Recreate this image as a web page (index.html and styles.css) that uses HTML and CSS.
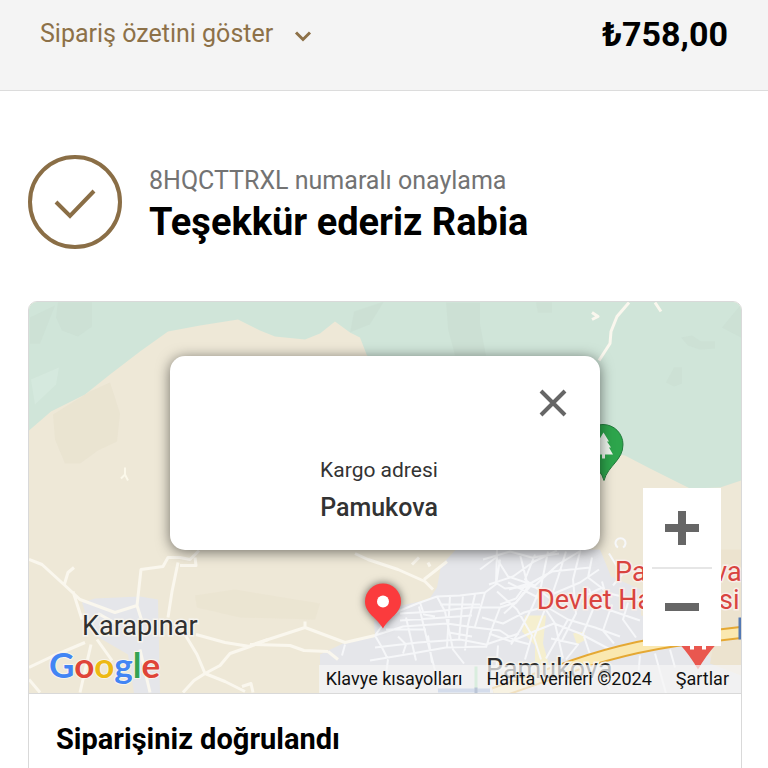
FILE: index.html
```html
<!DOCTYPE html>
<html lang="tr">
<head>
<meta charset="utf-8">
<meta name="viewport" content="width=device-width, initial-scale=1">
<title>Teşekkür ederiz</title>
<link rel="stylesheet" href="styles.css">
</head>
<body>
<header class="summary">
  <button class="summary-toggle" type="button">Sipariş özetini göster
    <svg class="chevron" viewBox="0 0 18 12" aria-hidden="true"><path d="M2 2.500L9 9.500L16 2.500"/></svg>
  </button>
  <span class="total">₺758,00</span>
</header>
<main class="content">
  <section class="thanks">
    <svg class="check" viewBox="0 0 94 94" aria-hidden="true"><circle cx="47" cy="47" r="45"/><path d="M28 47L42 61L66 36"/></svg>
    <div class="thanks-text">
      <p class="order-no">8HQCTTRXL numaralı onaylama</p>
      <h1 class="title">Teşekkür ederiz Rabia</h1>
    </div>
  </section>
  <section class="card">
    <div class="map">
      <svg class="map-art" viewBox="29 302 712 392" preserveAspectRatio="xMidYMid slice">
        <rect x="29" y="302" width="712" height="392" fill="#eee8d7"/>
        <path fill="#d0e5d9" d="M29 302H741V481L720 488L690 489L650 469L625 456L600 452L367 356L360 338L350 333L335 322L320 334L305 340L275 337L260 331L238 320L200 326L168 332L140 352L110 375L85 395L51 412L29 431Z"/>
        <g fill="#c9ddd1" opacity=".5"><path d="M58 303H92V327L78 337L62 331L56 318Z"/><path d="M30 318L55 306L40 344H30Z"/><path d="M354 312L384 302L370 325L350 333Z"/><path d="M446 303H480V324L486 356H455L448 330Z"/><path d="M536 303H552V313H538Z"/><path d="M681 338L692 336L701 342H715V349L700 350L688 346Z"/><path d="M674 368H682V384L674 387L666 383Z"/><path d="M722 328L741 305V338Z"/></g>
        <path fill="#d5e9de" d="M31 380L59 368L56 385L35 405Z"/>
        <path fill="#e9e2cf" opacity=".8" d="M53 415L90 392L110 383L120 414L117 442L98 451L80 464H65L55 440Z"/>
        <path fill="#e9e2cf" d="M195 596L235 590L320 604L315 620L240 618L197 608Z" opacity=".6"/>
        <path d="M125 468V475L121 479M125 475L128 481" fill="none" stroke="#fbf8ea" stroke-width="2"/>
        <g fill="#e5e6ea"><path d="M82 603L95 599L140 597L158 600L160 694H134L128 655L92 634Z"/><path d="M320 694V655L345 643L375 636L374 622L401 606L429 600L437 588L441 566L456 550H600L611 577L641 590V616L680 625L712 660L741 672V694Z"/></g>
        <path fill="#ece3cf" d="M645 550H741V676L710 664L717 625L645 625Z"/>
        <g fill="#f5efcf"><path d="M525 616H546L543 644L550 669H535V646L522 632Z"/><path d="M573 634L584 632L586 640L577 645Z"/></g>
        <g class="roads">
          <path d="M29 560L42 565L65 586L80 600L115 613L137 606L141 570L163 567L168 558H180L190 560L199 551M180 566H196L195 558M64 586L68 573L74 568M73 592L82 620M178 563L172 592L168 618M98 614L116 624M137 606L142 622M196 635L225 643L250 647L268 640M185 635L197 655L205 674L194 681L183 693M205 674L225 682L245 692M205 674L220 666L230 654L250 647M29 668L52 657L85 643M91 645L80 693M97 640L112 661M140 650L150 693M29 680L40 693M242 687L251 684L253 693"/>
          <path d="M250 646L305 628L345 643L375 636M305 628V622M250 645L290 646L304 651L328 652M328 652L338 660M355 554L368 560L398 570L425 582L433 590M424 580L447 562M412 565L419 558M428 563L430 567"/>
          <path d="M629 303L617 317L611 332L610 344L599 361M655 303L661 312M592 313L598 317L592 320"/>
        </g>
        <g class="streets">
          <path d="M375 636L386 621L400 611L420 603L437 597L460 596L485 593L497 584L505 589L530 587M437 597L445 612L453 650L464 664M420 603L424 615L435 617M375 636L382 648L388 660M375 636L403 627L447 624L475 628L500 631L515 641L530 645M375 648L418 643L460 640L486 645L519 634M370 661L412 654L446 648L487 647M400 614L435 612L470 608L500 608M400 621L430 619L472 616M398 637L406 645L403 654M419 607L427 640L440 690M406 618L416 661M450 597L447 647M463 596L459 640M475 595L468 625L465 651M485 593L475 627M440 605H480M449 633L472 637M386 630L426 630M428 636L432 663M496 585L500 560M497 550L496 585M500 608L493 626L486 648M530 587L516 603L500 608"/>
          <path d="M483 560L510 552L532 558L559 554M489 585L513 577L534 562L557 551M480 570L496 558L508 577L535 586L558 565L581 551M509 590L532 583L552 572L590 568M500 605L516 599L526 585L554 594L580 583L599 570M520 555L528 587L516 603L504 614M535 555L525 580L550 599L576 601L602 588M548 552L541 587L532 608L521 629L511 645M566 552L558 578L548 607M580 552L573 580L576 614L562 641M592 558L588 578L609 594L640 601M482 618L503 624L524 613L546 607L568 620L595 628L620 637M489 634L511 642L534 632L554 624L580 634L612 651M497 592L517 610L532 636L525 660M508 583L538 598L555 624L563 659M546 607L534 638L541 660M568 620L546 659M582 604L608 610L640 621M595 605L583 634L590 655M612 605L603 631L614 644M628 603L623 620L636 638M551 639L578 645L566 660M589 589L595 605M602 582L608 603M609 554L622 575L613 586M618 548A5 5 0 1 1 623 548"/>
          <path d="M345 645L342 656M388 660L384 690M498 646L495 690M560 681L590 675L630 676M590 660L610 690M640 656L637 690M655 654L666 694M670 650L675 668"/>
        </g>
        <path d="M494 694L560 671Q620 648 690 639L741 633" fill="none" stroke="#e5a833" stroke-width="13"/>
        <path d="M494 694L560 671Q620 648 690 639L741 633" fill="none" stroke="#fae8b0" stroke-width="9"/>
        <path d="M740 618V640" stroke="#5379b4" stroke-width="3"/>
        <path d="M438 691H490" stroke="#7d9bd0" stroke-width="4"/>
        <path d="M476 667V690" stroke="#8fd7a0" stroke-width="3"/><path d="M476 688V694" stroke="#254a86" stroke-width="3"/>
        <path d="M604 481C600 466 583 461 583 445A20 20 0 0 1 623 445C623 461 608 466 604 481Z" fill="#2da54c" stroke="#237b3d"/>
        <path d="M603.500 433L598 442H600L596 448H598L594 455H602V459H605V455H613L609 448H611L607 442H609Z" fill="#eef5ed"/>
        <path d="M698 670Q690 656 680 645A21 21 0 1 1 716 645Q706 656 698 670Z" fill="#e9574f"/>
        <path d="M692 650V634M704 650V634M692 642H704" stroke="#fff" stroke-width="4"/>
        <g class="place-name"><text x="82" y="635">Karapınar</text><text x="486" y="678">Pamukova</text></g>
        <g class="hospital-name"><text x="615" y="581">Pamukova</text><text x="537" y="609">Devlet Hastanesi</text></g>
        <text class="google" x="49" y="678"><tspan fill="#4285f4">G</tspan><tspan fill="#df4438">o</tspan><tspan fill="#edb914">o</tspan><tspan fill="#4285f4">g</tspan><tspan fill="#34a353">l</tspan><tspan fill="#df4438">e</tspan></text>
        <path class="pin" d="M383 629C377 618 365 614 365 602A18 18 0 0 1 401 602C401 614 389 618 383 629Z"/>
        <circle cx="383" cy="602" r="6" fill="#fff"/>
      </svg>
      <div class="popup">
        <button class="close" type="button" aria-label="Kapat"><svg viewBox="0 0 28 28" aria-hidden="true"><path d="M2 2L26 26M26 2L2 26"/></svg></button>
        <p class="popup-label">Kargo adresi</p>
        <p class="popup-place">Pamukova</p>
      </div>
      <div class="zoom">
        <button class="zoom-button" type="button" aria-label="Yakınlaştır"><svg viewBox="0 0 36 36" aria-hidden="true"><path d="M1 18H35M18 1V35"/></svg></button>
        <button class="zoom-button" type="button" aria-label="Uzaklaştır"><svg viewBox="0 0 36 36" aria-hidden="true"><path d="M1 18H35"/></svg></button>
      </div>
      <div class="credits">
        <button class="credit" type="button">Klavye kısayolları</button>
        <span class="credit">Harita verileri ©2024</span>
        <a class="credit" href="#">Şartlar</a>
      </div>
    </div>
    <h2 class="status">Siparişiniz doğrulandı</h2>
  </section>
</main>
</body>
</html>
```
FILE: styles.css
```css
* { box-sizing: border-box; }
body { margin: 0; background: #fff; color: #000; font-family: Roboto, sans-serif; }
button { margin: 0; padding: 0; border: 0; background: none; color: inherit; font: inherit; }
p, h1, h2 { margin: 0; }
svg { display: block; fill: none; }

.summary { display: flex; justify-content: space-between; align-items: center; padding: 14px 40px 36px; background: #f4f4f4; border-bottom: 1px solid #dcdcdc; }
.summary-toggle { display: flex; align-items: center; gap: 21px; color: #8d7148; font-size: 25px; line-height: 40px; }
.chevron { width: 18px; height: 12px; margin-top: 4px; stroke: currentColor; stroke-width: 3; }
.total { font-size: 34px; font-weight: 700; line-height: 40px; }

.content { padding: 64px 26px 0 28px; }
.thanks { display: flex; align-items: center; gap: 27px; }
.thanks-text { padding-top: 3px; }
.check { width: 94px; height: 94px; stroke: #8a6e46; stroke-width: 4; }
.order-no { color: #737373; font-size: 25px; line-height: 36px; }
.title { font-size: 38px; font-weight: 700; line-height: 46px; }

.card { margin-top: 52px; border: 1px solid #d9d9d9; border-radius: 9px; overflow: hidden; }
.map { position: relative; height: 392px; border-bottom: 1px solid #d9d9d9; }
.map-art { width: 100%; height: 100%; }
.roads, .streets { fill: none; stroke: #faf7ee; stroke-width: 3; stroke-linejoin: round; }
.streets { stroke: #f6f7f9; stroke-width: 2; }
.place-name { fill: #303030; stroke: #f5f3ed; stroke-width: 3; paint-order: stroke; font-size: 27px; }
.hospital-name { fill: #d9443f; stroke: #f8eee9; stroke-width: 3; paint-order: stroke; font-size: 27px; }
.google { font-family: Lato, sans-serif; font-size: 35px; font-weight: 700; stroke: #f7f4ec; stroke-width: 2; paint-order: stroke; }
.pin { fill: #fb3b3d; filter: drop-shadow(0 0 4px #0009); }

.popup { position: absolute; top: 54px; left: 50%; width: 430px; height: 194px; padding: 97px 12px 0 0; transform: translateX(-50%); border-radius: 15px; background: #fff; box-shadow: 0 2px 14px #0008; color: #333; text-align: center; }
.close { position: absolute; top: 33px; right: 33px; }
.close svg { width: 28px; height: 28px; stroke: #666; stroke-width: 4; }
.popup-label { font-size: 21px; line-height: 34px; }
.popup-place { font-size: 25px; font-weight: 500; line-height: 42px; }

.zoom { position: absolute; right: 20px; bottom: 47px; width: 78px; background: #fff; }
.zoom-button { display: grid; place-items: center; width: 100%; height: 79px; }
.zoom-button + .zoom-button { background: linear-gradient(#e6e6e6, #e6e6e6) center top / 60px 2px no-repeat; }
.zoom-button svg { width: 36px; height: 36px; stroke: #666; stroke-width: 8; }

.credits { position: absolute; right: 0; bottom: 0; display: flex; gap: 24px; padding: 0 12px 0 7px; background: #f5f5f5b8; color: #111; font-size: 18px; line-height: 28px; }
.credit { color: inherit; text-decoration: none; }

.status { padding: 25px 27px; font-size: 29px; font-weight: 700; line-height: 40px; }
```
